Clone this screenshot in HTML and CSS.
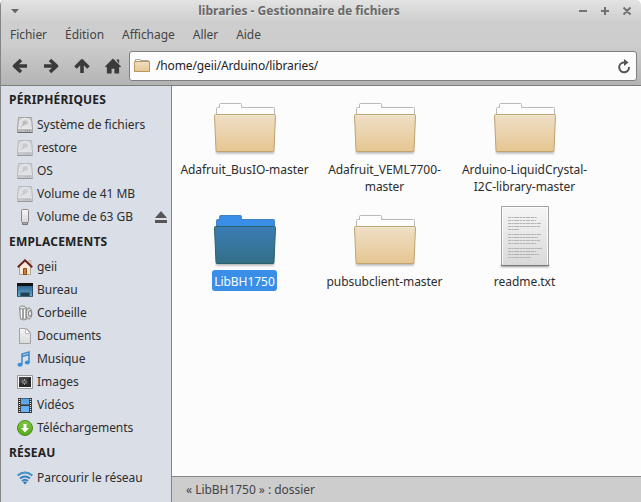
FILE: index.html
```html
<!DOCTYPE html>
<html lang="fr">
<head>
<meta charset="utf-8">
<title>libraries - Gestionnaire de fichiers</title>
<link rel="stylesheet" href="styles.css">
</head>
<body>
<svg class="defs" aria-hidden="true">
  <defs>
    <linearGradient id="tan" x1="0" y1="0" x2="0" y2="1"><stop offset="0" stop-color="#eedfc6"/><stop offset="1" stop-color="#e6c692"/></linearGradient>
    <linearGradient id="blue" x1="0" y1="0" x2="0" y2="1"><stop offset="0" stop-color="#3a7db6"/><stop offset="1" stop-color="#346f87"/></linearGradient>
    <linearGradient id="paper" x1="0" y1="0" x2="0" y2="1"><stop offset="0" stop-color="#f5f5f5"/><stop offset="1" stop-color="#d9d9d9"/></linearGradient>
    <linearGradient id="metal" x1="0" y1="0" x2="0" y2="1"><stop offset="0" stop-color="#c8c8c8"/><stop offset="1" stop-color="#ececec"/></linearGradient>
    <linearGradient id="green" x1="0" y1="0" x2="0" y2="1"><stop offset="0" stop-color="#7fc744"/><stop offset="1" stop-color="#55a91b"/></linearGradient>
    <linearGradient id="desk" x1="0" y1="0" x2="0" y2="1"><stop offset="0" stop-color="#24567f"/><stop offset="1" stop-color="#67abd6"/></linearGradient>
    <linearGradient id="film" x1="0" y1="0" x2="0" y2="1"><stop offset="0" stop-color="#5a9fd8"/><stop offset="1" stop-color="#68b7ff"/></linearGradient>
    <filter id="soft" x="-10%" y="-200%" width="120%" height="500%"><feGaussianBlur stdDeviation="1"/></filter>
  </defs>
  <symbol id="folder" viewBox="0 0 64 64">
    <rect x="3" y="57.500" width="58" height="3" fill="#000" opacity=".3" filter="url(#soft)"/>
    <path d="M3.500 24V15.500q0-1 1-1h2v-3q0-1 1-1h20q1 0 1 1v3h32q1 0 1 1V24z" fill="#fdfdfd" stroke="#b9b9b9"/>
    <path d="M2.500 21.500h59q1 0 1 1l-1.500 35q0 1-1 1H4q-1 0-1-1l-1.500-35q0-1 1-1z" fill="url(#tan)" stroke="#bda36c"/>
    <path d="M3 22.500h58" stroke="#f5ecdb" opacity=".7"/>
  </symbol>
  <symbol id="folder-selected" viewBox="0 0 64 64">
    <rect x="3" y="57.500" width="58" height="3" fill="#000" opacity=".3" filter="url(#soft)"/>
    <path d="M3.500 24V15.500q0-1 1-1h2v-3q0-1 1-1h20q1 0 1 1v3h32q1 0 1 1V24z" fill="#398ee7" stroke="#4381c0"/>
    <path d="M2.500 21.500h59q1 0 1 1l-1.500 35q0 1-1 1H4q-1 0-1-1l-1.500-35q0-1 1-1z" fill="url(#blue)" stroke="#2d6068"/>
  </symbol>
  <symbol id="disk" viewBox="0 0 16 16">
    <path d="M1.500.5h13l1 10.500v4.500H.5V11z" fill="url(#metal)" stroke="#a3a3a3"/>
    <ellipse cx="8" cy="5.800" rx="5.300" ry="4.500" fill="#dedede" stroke="#f3f3f3" stroke-width=".8"/>
    <ellipse cx="8" cy="5.500" rx="2" ry="1.600" fill="#c4c4c4" stroke="#aaa" stroke-width=".6"/>
    <path d="M7.500 6.500L4.500 9.500" stroke="#999" stroke-width=".9"/>
    <path d="M1 11.500h14v4H1z" fill="#b9b9b9"/><path d="M1 11.500h14" stroke="#efefef" stroke-width=".8"/><path d="M8 13.700h1m1 0h1m1 0h1" stroke="#888"/><path d="M.5 15.500h15" stroke="#6d6d6d"/>
  </symbol>
</svg>
<div class="window">
  <header class="chrome">
    <div class="titlebar">
      <svg class="win-menu" width="10" height="6" viewBox="0 0 10 6"><path d="M1 1h8L5 5.300z" fill="#666"/></svg>
      <h1>libraries - Gestionnaire de fichiers</h1>
      <svg class="win-buttons" width="54" height="10" viewBox="0 0 54 10"><path d="M1 5h8M23 5h8M27 1v8M45.500 1.500l7 7m0-7l-7 7" stroke="#727272" stroke-width="2"/></svg>
    </div>
    <nav class="menubar"><span>Fichier</span><span>Édition</span><span>Affichage</span><span>Aller</span><span>Aide</span></nav>
    <div class="toolbar">
      <div class="nav-icons">
        <svg viewBox="0 0 16 16"><path d="M9 2L2.500 8 9 14M3 8h12" class="arrow"/></svg>
        <svg viewBox="0 0 16 16"><path d="M7 2l6.500 6L7 14M13 8H1" class="arrow"/></svg>
        <svg viewBox="0 0 16 16"><path d="M1.500 9.500L8 3l6.500 6.500M8 4v11" class="arrow"/></svg>
        <svg viewBox="0 0 17 16"><path d="M8.500 0L17 8.500l-1 1-1-.7V16h-5v-5H7v5H2V8.800l-1 .7-1-1zM12 1h3v5z" fill="#3a3a3a"/></svg>
      </div>
      <div class="pathbar">
        <svg width="16" height="16" viewBox="0 0 16 16"><path d="M1.500 5V1.500h5v1h8V5" fill="#fff" stroke="#aaa"/><path d="M.5 3.500h15v10h-15z" fill="url(#tan)" stroke="#b9965b"/></svg>
        <span class="path">/home/geii/Arduino/libraries/</span>
        <svg class="reload" width="14" height="15" viewBox="0 0 14 15"><path d="M8.500 3.500H6.500A4.900 4.900 0 1 0 12 8" fill="none" stroke="#555" stroke-width="2"/><path d="M7 0l4.500 3.500L7 7z" fill="#555"/></svg>
      </div>
    </div>
  </header>
  <div class="body">
    <aside class="sidebar">
      <h2>PÉRIPHÉRIQUES</h2>
      <ul>
        <li><svg><use href="#disk"/></svg>Système de fichiers</li>
        <li><svg class="dim"><use href="#disk"/></svg>restore</li>
        <li><svg class="dim"><use href="#disk"/></svg>OS</li>
        <li><svg class="dim"><use href="#disk"/></svg>Volume de 41 MB</li>
        <li><svg viewBox="0 0 16 16"><path d="M5.500 13h5v2.500h-5z" fill="#aaa" stroke="#777"/><rect x="4.500" y=".5" width="7" height="13" rx="1" fill="url(#paper)" stroke="#8c8780"/></svg>Volume de 63 GB
          <svg class="eject" viewBox="0 0 12 12"><path d="M6 0l6 7H0zM0 9h12v3H0z" fill="#555"/></svg></li>
      </ul>
      <h2>EMPLACEMENTS</h2>
      <ul>
        <li><svg viewBox="0 0 16 16"><path d="M12 1.500h2v5h-2z" fill="#e9d9c9" stroke="#a6a090" stroke-width=".6"/><path d="M2.500 7.500L8 2l5.500 5.500v8h-11z" fill="#fae9dc" stroke="#b2a38f"/><path d="M6.500 9.500h3v6h-3z" fill="#ce7c36" stroke="#8b4d1d"/><path d="M.8 8.200L8 1.300l7.200 6.900" fill="none" stroke="#6e2020" stroke-width="2"/></svg>geii</li>
        <li><svg viewBox="0 0 16 16"><path d="M.5 1.500h15v13H.5z" fill="url(#desk)" stroke="#2b4a66"/><path d="M0 1h16v3H0z" fill="#111"/><path d="M3.500 10.500h9v4h-9z" fill="#25404f" stroke="#396b8c"/><path d="M1 14.500h14" stroke="#42667e"/></svg>Bureau</li>
        <li><svg viewBox="0 0 16 16"><path d="M2.500 3q3-2 7.500 0v11q-3 2-6.500 0z" fill="#c9cccb" stroke="#8b908e"/><path d="M4.500 4v9M7.500 4v9" stroke="#fff"/><path d="M6 4v10M9.300 4v9" stroke="#777"/><ellipse cx="5.500" cy="2.500" rx="3" ry="1.500" fill="#e7e7e7" stroke="#888"/><ellipse cx="12" cy="8.500" rx="2.800" ry="5.500" fill="#ddd" stroke="#888"/><ellipse cx="13" cy="8.500" rx="1.500" ry="3" fill="#eee" stroke="#777"/></svg>Corbeille</li>
        <li><svg viewBox="0 0 16 16"><path d="M2.500.5h7l4 4v11h-11z" fill="url(#paper)" stroke="#a3a3a3"/><path d="M8.500.5v5h5z" fill="#fff" stroke="#bbb"/></svg>Documents</li>
        <li><svg viewBox="0 0 16 16"><path d="M5 13V3l7-2v10.500M5 5.500l7-2" fill="none" stroke="#3d87c5" stroke-width="1.500"/><ellipse cx="3" cy="13.700" rx="2.600" ry="2" fill="#398fd6"/><ellipse cx="10.300" cy="11.500" rx="2.500" ry="2" fill="#398fd6"/></svg>Musique</li>
        <li><svg viewBox="0 0 16 16"><path d="M.5 1.500h15v13H.5z" fill="#f7f7f7" stroke="#999"/><path d="M2 3h12v10H2z" fill="#292929"/><path d="M2 3h12L2 10z" fill="#444"/><path d="M7.500 5v6M4.500 8h6M5.300 5.800l4.400 4.400m0-4.400l-4.400 4.400" stroke="#aaa" stroke-width=".9"/><circle cx="7.500" cy="8" r="1" fill="#444"/></svg>Images</li>
        <li><svg viewBox="0 0 16 16"><path d="M1 1h14v15H1z" fill="#343434"/><path d="M4 1.500h8v6H4zm0 7.500h8v6H4z" fill="url(#film)"/><path d="M2.500 2v13M13.500 2v13" stroke="#e4e4e4" stroke-width="1.300" stroke-dasharray="1 1"/></svg>Vidéos</li>
        <li><svg viewBox="0 0 16 16"><circle cx="8" cy="8" r="7.500" fill="url(#green)" stroke="#489019"/><path d="M6.500 4h3v4H12l-4 4.500L4 8h2.500z" fill="#fff"/></svg>Téléchargements</li>
      </ul>
      <h2>RÉSEAU</h2>
      <ul>
        <li><svg viewBox="0 0 16 16"><path d="M.7 5.500q7.300-6 14.600 0M3 8.500q5-4 10 0M5 11q3-2.500 6 0" fill="none" stroke="#2f82bd" stroke-width="2"/><path d="M6 12.200q2-1.500 4 0L8 14.500z" fill="#2674aa"/><path d="M1.500 5q6.500-4.800 13 0" fill="none" stroke="#6aafdc" stroke-width=".7"/></svg>Parcourir le réseau</li>
      </ul>
    </aside>
    <div class="content">
      <main class="files">
        <figure><svg><use href="#folder"/></svg><figcaption>Adafruit_BusIO-master</figcaption></figure>
        <figure><svg><use href="#folder"/></svg><figcaption>Adafruit_VEML7700-<br>master</figcaption></figure>
        <figure><svg><use href="#folder"/></svg><figcaption>Arduino-LiquidCrystal-<br>I2C-library-master</figcaption></figure>
        <figure><svg><use href="#folder-selected"/></svg><figcaption class="selected">LibBH1750</figcaption></figure>
        <figure><svg><use href="#folder"/></svg><figcaption>pubsubclient-master</figcaption></figure>
        <figure><svg viewBox="0 0 64 64"><path d="M8 60h48v1.500H8z" fill="#555" filter="url(#soft)"/><path d="M8.500 1.500h47v59h-47z" fill="url(#paper)" stroke="#a2a2a2"/><path d="M9.500 59.500v-57h45v57" fill="none" stroke="#fff" opacity=".8"/><path d="M8 60.500h48" stroke="#777"/><path d="M15 12.500h29M15 15.500h28M15 18.500h33M15 21.500h32M15 24.500h11M15 29.500h33M15 32.500h30M15 35.500h32M15 38.500h28M15 43.500h34M15 46.500h28M15 49.500h31M15 52.500h23" stroke="#b4b4b4" stroke-dasharray="3 .5 2 .5 5 .5"/></svg><figcaption>readme.txt</figcaption></figure>
      </main>
      <footer class="statusbar">« LibBH1750 » : dossier</footer>
    </div>
  </div>
</div>
</body>
</html>
```
FILE: styles.css
```css
* { box-sizing: border-box; }
body {
  margin: 0;
  background: #fff;
  font: 12px/17px "Noto Sans", sans-serif;
  letter-spacing: -0.04px;
  color: #2d2d2d;
}
svg { display: block; flex: none; }
.defs { position: absolute; width: 0; height: 0; }
h1, h2, ul, figure { margin: 0; padding: 0; }
.window {
  width: 641px;
  height: 502px;
  display: flex;
  flex-direction: column;
  border-left: 1px solid #858585;
  border-radius: 5px 5px 0 0;
  overflow: hidden;
}
.chrome {
  height: 86px;
  border-bottom: 1px solid #7d7d7d;
  background: linear-gradient(#e3e3e3 0, #cecece 22px, #cdcdcd 45px, #b3b3b3 85px);
}
.titlebar {
  height: 22px;
  display: flex;
  align-items: center;
  padding: 0 9px;
}
.titlebar h1 {
  flex: 1;
  text-align: center;
  font-size: 12px;
  line-height: 22px;
  letter-spacing: 0;
  color: #696969;
  text-shadow: 0 1px #e8e8e8;
}
.menubar {
  height: 24px;
  display: flex;
  gap: 18px;
  padding: 4px 9px 3px;
  color: #444;
}
.toolbar {
  display: flex;
  align-items: center;
  height: 39px;
  padding: 1px 4px 0 11px;
}
.nav-icons { display: flex; gap: 15px; width: 117px; }
.nav-icons svg { width: 16px; height: 16px; }
.arrow { fill: none; stroke: #3a3a3a; stroke-width: 3.6; stroke-linejoin: round; }
.pathbar {
  flex: 1;
  display: flex;
  align-items: center;
  gap: 6px;
  height: 30px;
  padding: 0 5px 0 4px;
  border: 1px solid #7f7f7f;
  border-radius: 3px;
  background: #fcfcfc;
  color: #222;
}
.path { padding-bottom: 2px; letter-spacing: -0.13px; }
.reload { margin-left: auto; }
.body { display: flex; flex: 1; min-height: 0; }
.sidebar {
  width: 171px;
  border-right: 1px solid #858585;
  background: #dadee6;
}
.sidebar h2 {
  padding-left: 8px;
  font-size: 12px;
  line-height: 27px;
  letter-spacing: 0.2px;
  color: #222;
}
.sidebar ul { list-style: none; }
.sidebar li {
  height: 23px;
  display: flex;
  align-items: center;
  gap: 4px;
  padding-left: 16px;
}
.sidebar li svg { width: 16px; height: 16px; }
.sidebar li .dim { opacity: .6; }
.sidebar li .eject { width: 12px; height: 12px; margin: 0 4px 0 auto; }
.content { flex: 1; display: flex; flex-direction: column; background: #fcfcfc; }
.files {
  flex: 1;
  display: grid;
  grid-template-columns: repeat(3, 140px);
  grid-auto-rows: 112px;
  align-content: start;
  padding: 7px 0 0 3px;
}
.files figure { display: flex; flex-direction: column; align-items: center; }
.files svg { width: 64px; height: 64px; }
.files figcaption {
  margin: 1px 1px 0 0;
  padding: 3px 2px 1px;
  border-radius: 3px;
  text-align: center;
  white-space: nowrap;
}
.files .selected { background: #398ee7; color: #fff; }
.statusbar {
  height: 26px;
  padding: 4px 14px;
  border-top: 1px solid #858585;
  background: #cdcdcd;
  color: #444;
}
```
